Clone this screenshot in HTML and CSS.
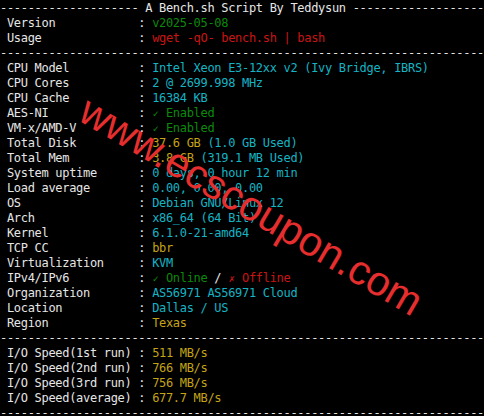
FILE: index.html
```html
<!DOCTYPE html>
<html>
<head>
<meta charset="utf-8">
<link rel="stylesheet" href="styles.css">
</head>
<body>
<div class="term">
<pre class="out">-------------------- A Bench.sh Script By Teddysun -------------------
 Version            : <span class="g">v2025-05-08</span>
 Usage              : <span class="r">wget -qO- bench.sh | bash</span>
----------------------------------------------------------------------
 CPU Model          : <span class="c">Intel Xeon E3-12xx v2 (Ivy Bridge, IBRS)</span>
 CPU Cores          : <span class="c">2 @ 2699.998 MHz</span>
 CPU Cache          : <span class="c">16384 KB</span>
 AES-NI             : <span class="g"><span class="ck">✓</span> Enabled</span>
 VM-x/AMD-V         : <span class="g"><span class="ck">✓</span> Enabled</span>
 Total Disk         : <span class="y">37.6 GB</span> <span class="c">(1.0 GB Used)</span>
 Total Mem          : <span class="y">3.8 GB</span> <span class="c">(319.1 MB Used)</span>
 System uptime      : <span class="c">0 days, 0 hour 12 min</span>
 Load average       : <span class="c">0.00, 0.00, 0.00</span>
 OS                 : <span class="c">Debian GNU/Linux 12</span>
 Arch               : <span class="c">x86_64 (64 Bit)</span>
 Kernel             : <span class="c">6.1.0-21-amd64</span>
 TCP CC             : <span class="y">bbr</span>
 Virtualization     : <span class="c">KVM</span>
 IPv4/IPv6          : <span class="g"><span class="ck">✓</span> Online</span> / <span class="r"><span class="ck">✗</span> Offline</span>
 Organization       : <span class="c">AS56971 AS56971 Cloud</span>
 Location           : <span class="c">Dallas / US</span>
 Region             : <span class="y">Texas</span>
----------------------------------------------------------------------
 I/O Speed(1st run) : <span class="y">511 MB/s</span>
 I/O Speed(2nd run) : <span class="y">766 MB/s</span>
 I/O Speed(3rd run) : <span class="y">756 MB/s</span>
 I/O Speed(average) : <span class="y">677.7 MB/s</span>
----------------------------------------------------------------------</pre>
<div class="mark">www.ecscoupon.com</div>
</div>
</body>
</html>
```

FILE: styles.css
```css
html, body {
  margin: 0;
  padding: 0;
  background: #000;
}
.term {
  position: relative;
  width: 484px;
  height: 416px;
  overflow: hidden;
  background: #000;
}
.out {
  margin: 0;
  padding: 1px 0 0 0;
  font-family: "DejaVu Sans Mono", "Liberation Mono", monospace;
  font-size: 12px;
  letter-spacing: -0.31px;
  line-height: 15px;
  color: #e6e6e6;
  white-space: pre;
}
.g { color: #0c8a0c; }
.r { color: #cc1414; }
.c { color: #14b4c4; }
.y { color: #c4a414; }
.ck {
  display: inline-block;
  width: 6.91px;
  font-size: 10px;
  text-align: center;
}
.mark {
  position: absolute;
  left: 94px;
  top: 89px;
  font-family: "Liberation Sans", Arial, sans-serif;
  font-size: 41.5px;
  color: #e62e2e;
  white-space: nowrap;
  transform-origin: 0 0;
  transform: rotate(30.5deg);
  line-height: 1;
}
```
